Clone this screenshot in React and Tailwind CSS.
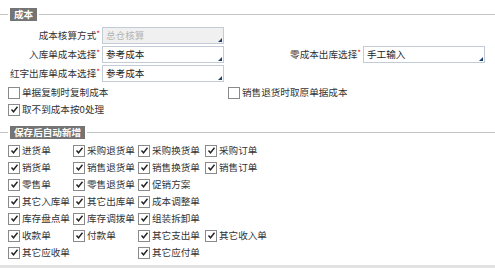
import React from "react";

const font = { fontFamily: '"Noto Sans CJK SC", "Liberation Sans", sans-serif' };

function Legend({ title }) {
  return (
    <div className="flex items-center h-[14px]">
      <div className="w-[8px] h-px bg-[#c4c4c4]" />
      <span className="ml-[2px] h-[13px] px-[4px] bg-[#747474] text-white font-bold leading-[13px]">
        {title}
      </span>
      <div className="ml-[2px] flex-1 h-px bg-[#c4c4c4]" />
    </div>
  );
}

function Check({ checked = true, label }) {
  return (
    <label className="flex items-center h-[17px] whitespace-nowrap">
      <span className="w-[12px] h-[12px] border border-[#8a8a8a] bg-white flex items-center justify-center shrink-0">
        {checked && (
          <svg width="9" height="9" viewBox="0 0 9 9">
            <path d="M1.5 4.5 L3.5 6.8 L7.5 1.8" fill="none" stroke="#222" strokeWidth="1.4" />
          </svg>
        )}
      </span>
      <span className="ml-[2px]">{label}</span>
    </label>
  );
}

function Select({ value, disabled = false }) {
  return (
    <div
      className={`relative w-[122px] h-[17px] border border-[#c3ccd6] pl-[3px] leading-[15px] ${
        disabled ? "bg-[#f0f0f0] text-[#b4b4b4]" : "bg-white text-[#222]"
      }`}
    >
      {value}
      <span className="absolute right-[1px] bottom-[1px] w-0 h-0 border-l-[4px] border-l-transparent border-b-[4px] border-b-[#1d3f73]" />
    </div>
  );
}

function Label({ text, className = "" }) {
  return (
    <div className={`text-right pr-[2px] ${className}`}>
      {text}
      <span className="text-[#e00] text-[8px] align-top">*</span>
    </div>
  );
}

const rows = [
  ["进货单", "采购退货单", "采购换货单", "采购订单"],
  ["销货单", "销售退货单", "销售换货单", "销售订单"],
  ["零售单", "零售退货单", "促销方案", null],
  ["其它入库单", "其它出库单", "成本调整单", null],
  ["库存盘点单", "库存调拨单", "组装拆卸单", null],
  ["收款单", "付款单", "其它支出单", "其它收入单"],
  ["其它应收单", null, "其它应付单", null],
];

export default function App() {
  return (
    <div className="w-[495px] h-[268px] bg-white text-[9.6px] text-[#333] overflow-hidden flex flex-col" style={font}>
      <div className="pt-[7px]">
        <Legend title="成本" />
      </div>
      <div className="mt-[6px] flex flex-col gap-[2px]">
        <div className="flex items-center">
          <Label text="成本核算方式" className="w-[102px]" />
          <Select value="总仓核算" disabled />
        </div>
        <div className="flex items-center">
          <Label text="入库单成本选择" className="w-[102px]" />
          <Select value="参考成本" />
          <Label text="零成本出库选择" className="w-[139px]" />
          <Select value="手工输入" />
        </div>
        <div className="flex items-center">
          <Label text="红字出库单成本选择" className="w-[102px]" />
          <Select value="参考成本" />
        </div>
      </div>
      <div className="mt-[2px] pl-[8px]">
        <div className="flex">
          <div className="w-[220px]">
            <Check checked={false} label="单据复制时复制成本" />
          </div>
          <Check checked={false} label="销售退货时取原单据成本" />
        </div>
        <Check label="取不到成本按0处理" />
      </div>
      <div className="mt-[7px]">
        <Legend title="保存后自动新增" />
      </div>
      <div className="mt-[3px] pl-[8px] grid grid-cols-[65px_65px_67px_1fr]">
        {rows.flat().map((item, i) =>
          item ? <Check key={i} label={item} /> : <div key={i} className="h-[17px]" />
        )}
      </div>
      <div className="mt-auto h-[3px] bg-[#e2e2e2]" />
    </div>
  );
}
